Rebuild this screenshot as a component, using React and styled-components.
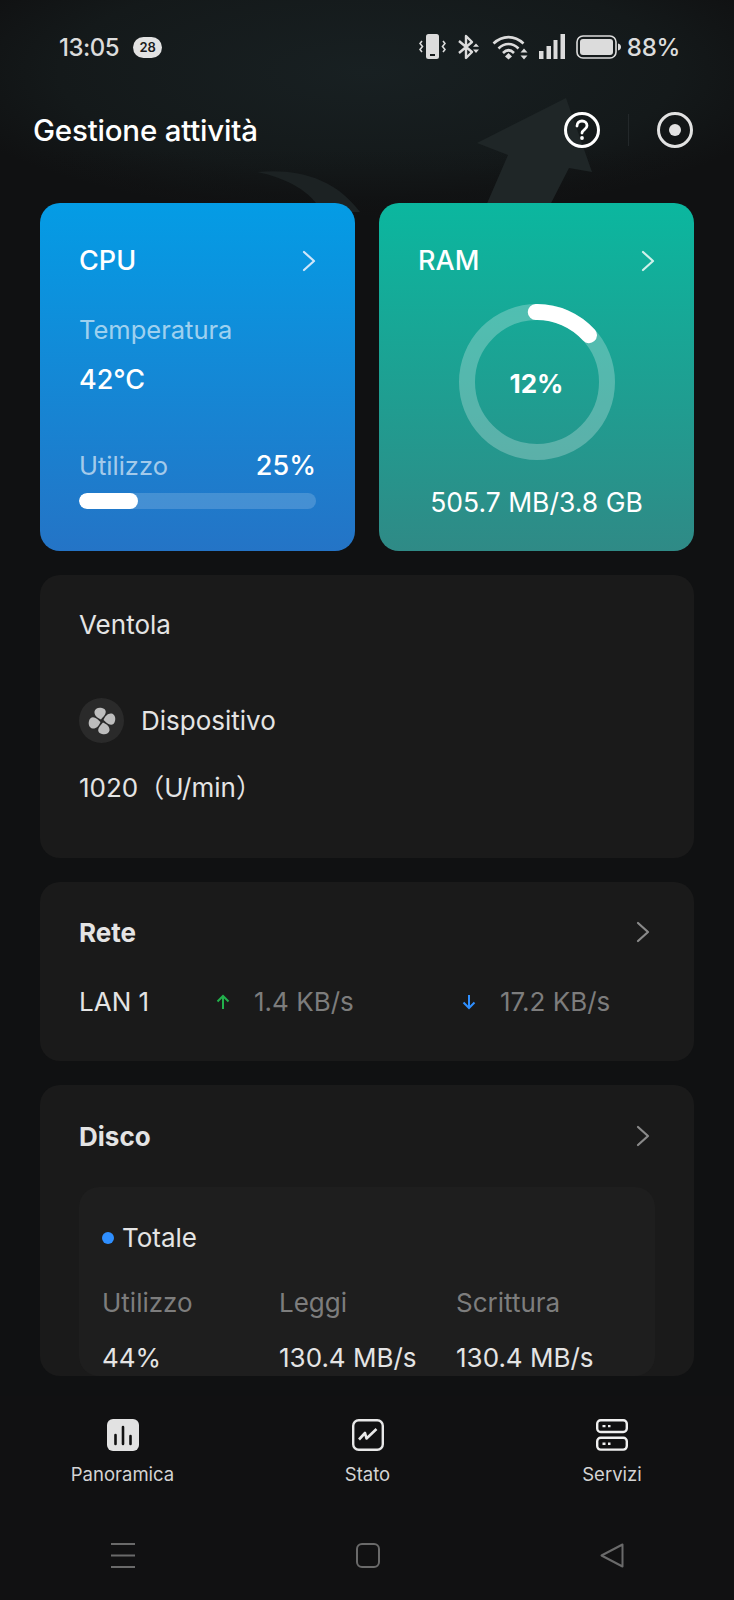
import React from "react";
import styled, { createGlobalStyle } from "styled-components";

const GlobalStyle = createGlobalStyle`
  * { box-sizing: border-box; }
  html, body { margin: 0; padding: 0; background: #101112; }
  body { font-family: Inter, "Noto Sans CJK SC", sans-serif; }
`;

const Screen = styled.div`
  position: relative;
  display: flex;
  flex-direction: column;
  width: 734px;
  height: 1600px;
  overflow: hidden;
  background: #101112;
  color: #e4e4e4;
`;

const Backdrop = styled.svg`
  position: absolute;
  top: 0;
  left: 0;
  width: 734px;
  height: 240px;
`;

const StatusBar = styled.div`
  position: relative;
  display: flex;
  align-items: center;
  height: 94px;
  padding: 0 54px 0 59px;
  color: #dcdcdc;
`;

const Time = styled.span`
  font-size: 24px;
  font-weight: 500;
  letter-spacing: -0.5px;
`;

const Badge = styled.span`
  display: flex;
  align-items: center;
  justify-content: center;
  width: 29px;
  height: 21px;
  margin-left: 14px;
  border-radius: 11px;
  background: #e2e2e2;
  color: #1a1a1a;
  font-size: 13px;
  font-weight: 600;
`;

const StatusIcons = styled.div`
  display: flex;
  align-items: center;
  margin-left: auto;
  gap: 11px;
`;

const Percent = styled.span`
  margin-left: -5px;
  font-size: 24px;
  font-weight: 500;
  letter-spacing: -0.3px;
`;

const Header = styled.header`
  position: relative;
  display: flex;
  align-items: center;
  height: 72px;
  padding: 0 41px 0 33px;
`;

const PageTitle = styled.h1`
  margin: 0;
  color: #fff;
  font-size: 29.5px;
  font-weight: 500;
  letter-spacing: -0.2px;
`;

const HeaderActions = styled.div`
  display: flex;
  align-items: center;
  margin-left: auto;
`;

const Divider = styled.span`
  width: 1px;
  height: 32px;
  margin: 0 28px;
  background: #23282a;
`;

const Content = styled.main`
  position: relative;
  display: flex;
  flex: 1;
  flex-direction: column;
  gap: 24px;
  min-height: 0;
  margin: 37px 40px 0 40px;
  overflow: hidden;
`;

const TopCards = styled.div`
  display: grid;
  flex-shrink: 0;
  grid-template-columns: 1fr 1fr;
  gap: 24px;
  height: 348px;
`;

const ColorCard = styled.section`
  display: flex;
  flex-direction: column;
  padding: 40px 39px 0;
  border-radius: 20px;
  background: linear-gradient(180deg, ${(p) => p.$from}, ${(p) => p.$to});
  color: #fff;
`;

const CardHead = styled.div`
  display: flex;
  align-items: center;
  justify-content: space-between;
  height: 36px;
  font-size: 27px;
  font-weight: 500;
  line-height: 36px;
`;

const SoftLabel = styled.div`
  margin-top: ${(p) => p.$top || 0}px;
  color: rgba(255, 255, 255, 0.62);
  font-size: 25.5px;
  line-height: 36px;
`;

const BigValue = styled.div`
  margin-top: ${(p) => p.$top || 0}px;
  font-size: 27px;
  font-weight: 500;
  line-height: 36px;
`;

const UsageRow = styled.div`
  display: flex;
  align-items: center;
  justify-content: space-between;
  margin-top: 50px;
`;

const Track = styled.div`
  height: 16px;
  margin-top: 9px;
  border-radius: 8px;
  background: rgba(255, 255, 255, 0.17);
  overflow: hidden;
`;

const Fill = styled.div`
  height: 100%;
  border-radius: 8px;
  background: #fff;
`;

const RingWrap = styled.div`
  display: grid;
  place-items: center;
  align-self: center;
  width: 156px;
  height: 156px;
  margin-top: 25px;

  > * {
    grid-area: 1 / 1;
  }
`;

const RingLabel = styled.span`
  padding-top: 2px;
  font-size: 26px;
  font-weight: 700;
`;

const RamValue = styled.div`
  margin-top: 24px;
  font-size: 26.5px;
  font-weight: 400;
  line-height: 36px;
  text-align: center;
  white-space: nowrap;
`;

const DarkCard = styled.section`
  flex-shrink: 0;
  height: ${(p) => (p.$height ? `${p.$height}px` : "auto")};
  padding: ${(p) => p.$padTop || 32}px 39px 0;
  border-radius: 20px;
  background: #1a1a1a;
`;

const PlainTitle = styled.div`
  font-size: 26px;
  line-height: 36px;
`;

const DeviceRow = styled.div`
  display: flex;
  align-items: center;
  gap: 17px;
  margin-top: 55px;
  font-size: 26px;
`;

const FanBadge = styled.span`
  display: flex;
  align-items: center;
  justify-content: center;
  width: 45px;
  height: 45px;
  border-radius: 50%;
  background: #2a2a2a;
`;

const Rpm = styled.div`
  margin-top: 27px;
  font-size: 26px;
  line-height: 36px;
  white-space: nowrap;
`;

const SectionHead = styled.div`
  display: flex;
  align-items: center;
  justify-content: space-between;
  height: 36px;
  padding-right: 5px;
  font-size: 26px;
  font-weight: 700;
`;

const NetRow = styled.div`
  display: grid;
  grid-template-columns: 137px 246px 1fr;
  align-items: center;
  margin-top: 34px;
  font-size: 26px;
  line-height: 36px;
`;

const NetSpeed = styled.div`
  display: flex;
  align-items: center;
  gap: 24px;
  color: #7d7d7d;
`;

const DiskPanel = styled.div`
  margin-top: 33px;
  padding: 33px 23px 0;
  border-radius: 20px;
  background: #1e1e1e;
`;

const DiskName = styled.div`
  display: flex;
  align-items: center;
  gap: 8px;
  font-size: 26px;
  line-height: 36px;
`;

const Dot = styled.span`
  width: 12px;
  height: 12px;
  border-radius: 50%;
  background: #2f8fff;
`;

const DiskGrid = styled.div`
  display: grid;
  grid-template-columns: repeat(3, 177px);
  row-gap: 19px;
  margin-top: 29px;
  font-size: 26px;
  line-height: 36px;
  white-space: nowrap;
`;

const DiskLabel = styled.span`
  color: #7d7d7d;
`;

const BottomNav = styled.nav`
  display: grid;
  grid-template-columns: 245px 245px 244px;
  flex-shrink: 0;
  height: 124px;
  padding-top: 23px;
  background: #111112;
`;

const Tab = styled.div`
  display: flex;
  flex-direction: column;
  align-items: center;
  gap: 11px;
  color: #d4d4d4;
  font-size: 18.5px;
  line-height: 24px;
`;

const SystemNav = styled.div`
  display: grid;
  grid-template-columns: 245px 245px 244px;
  flex-shrink: 0;
  justify-items: center;
  height: 80px;
  padding-top: 23px;
  background: #111112;
`;

const Chevron = ({ color = "#fff" }) => (
  <svg width="14" height="22" viewBox="0 0 14 22" fill="none">
    <path d="M2 2l10 9-10 9" stroke={color} strokeWidth="2.2" strokeLinecap="round" strokeLinejoin="round" />
  </svg>
);

const VibrateIcon = () => (
  <svg width="27" height="26" viewBox="0 0 27 26" fill="none">
    <rect x="7" y="0" width="13" height="25" rx="2.5" fill="#dcdcdc" />
    <rect x="11" y="20" width="5" height="2" fill="#14191a" />
    <path d="M3 7L1 9.5 3.5 12.5 1 15.5 3 18M24 7l2 2.5-2.5 3 2.5 3-2 2.5" stroke="#dcdcdc" strokeWidth="1.6" />
  </svg>
);

const BluetoothIcon = () => (
  <svg width="24" height="26" viewBox="0 0 24 26" fill="none">
    <path d="M2 7l13 11-6 6V2l6 6L2 19" stroke="#dcdcdc" strokeWidth="2.4" strokeLinejoin="round" />
    <path d="M19 9.5l3 3.2h-6zM19 19l3-3.4h-6z" fill="#dcdcdc" />
  </svg>
);

const WifiIcon = () => (
  <svg width="36" height="26" viewBox="0 0 36 26" fill="none">
    <path d="M1.5 9.5C10.5 1 22.5 1 31.5 9.5M6.5 14.5C12.5 8.5 20.5 8.5 26.5 14.5M11 19c3.500-3.500 7.500-3.500 11 0" stroke="#dcdcdc" strokeWidth="2.6" />
    <path d="M16.500 19l3.500 3.500-3.500 3-3.500-3z" fill="#dcdcdc" />
    <path d="M32 14.500l3.500 4h-7zM32 25.500l3.500-4h-7z" fill="#dcdcdc" />
  </svg>
);

const SignalIcon = () => (
  <svg width="26" height="26" viewBox="0 0 26 26" fill="#dcdcdc">
    <rect x="0" y="17" width="4.500" height="8" />
    <rect x="7.500" y="12" width="4.500" height="13" />
    <rect x="14.500" y="6" width="4" height="19" />
    <rect x="21.500" y="0" width="4.500" height="25" />
  </svg>
);

const BatteryIcon = () => (
  <svg width="45" height="24" viewBox="0 0 45 24" fill="none">
    <rect x="1" y="1" width="39" height="22" rx="6" stroke="#dcdcdc" strokeWidth="1.600" />
    <rect x="4" y="4" width="33" height="16" rx="3" fill="#dcdcdc" />
    <path d="M42 8.500c2 .6 3 1.800 3 3.500s-1 2.900-3 3.500z" fill="#dcdcdc" />
  </svg>
);

const HelpIcon = () => (
  <svg width="36" height="36" viewBox="0 0 36 36" fill="none">
    <circle cx="18" cy="18" r="16.500" stroke="#fff" strokeWidth="3" />
    <path d="M13 14c0-3 2.200-5 5-5s5 2 5 4.700c0 3.800-5 3.800-5 7.300" stroke="#fff" strokeWidth="2.800" strokeLinecap="round" />
    <circle cx="18" cy="26" r="1.900" fill="#fff" />
  </svg>
);

const RecordIcon = () => (
  <svg width="36" height="36" viewBox="0 0 36 36" fill="none">
    <circle cx="18" cy="18" r="16.500" stroke="#e2e2e2" strokeWidth="3" />
    <circle cx="18" cy="18" r="6" fill="#e2e2e2" />
  </svg>
);

const FanIcon = () => (
  <svg width="28" height="28" viewBox="0 0 28 28" fill="#bdbdbd">
    <path d="M13 12.500C9 11 6 8 6.500 4.500 7 1.500 10.500 0 14 1c4 1 4.500 4 3 6.500-1 1.700-2.500 3-4 5z" />
    <path d="M15.500 13c1.500-4 4.500-7 8-6.500 3 .5 4.500 4 3.500 7.500-1 4-4 4.500-6.500 3-1.700-1-3.500-2.500-5-4z" />
    <path d="M15 15.500c4 1.500 7 4.500 6.500 8-.5 3-4 4.500-7.500 3.500-4-1-4.500-4-3-6.500 1-1.700 2.500-3.500 4-5z" />
    <path d="M12.500 15c-1.500 4-4.500 7-8 6.500C1.500 21 0 17.500 1 14c1-4 4-4.500 6.500-3 1.700 1 3.500 2.500 5 4z" />
  </svg>
);

const ArrowIcon = ({ down, color }) => (
  <svg width="14" height="16" viewBox="0 0 14 16" fill="none">
    <path
      d={down ? "M7 1v13M1.500 8.500L7 14l5.500-5.500" : "M7 15V2M1.500 7.500L7 2l5.500 5.500"}
      stroke={color}
      strokeWidth="2"
    />
  </svg>
);

const OverviewIcon = () => (
  <svg width="32" height="32" viewBox="0 0 32 32">
    <rect width="32" height="32" rx="6" fill="#e2e2e2" />
    <path d="M8.500 16v9M16 8v17M23.500 17v8" stroke="#111" strokeWidth="2.600" strokeLinecap="round" />
  </svg>
);

const StatusIcon = () => (
  <svg width="32" height="32" viewBox="0 0 32 32" fill="none">
    <rect x="1.200" y="1.200" width="29.600" height="29.600" rx="5.500" stroke="#e8e8e8" strokeWidth="2.400" />
    <path d="M7 20.500l6-6.500 1.500 5.500L24.500 10" stroke="#e8e8e8" strokeWidth="2.600" strokeLinejoin="round" />
  </svg>
);

const ServicesIcon = () => (
  <svg width="32" height="32" viewBox="0 0 32 32" fill="none">
    <rect x="1.200" y="1.200" width="29.600" height="11.800" rx="3.500" stroke="#f0f0f0" strokeWidth="2.400" />
    <rect x="1.200" y="18.800" width="29.600" height="11.800" rx="3.500" stroke="#f0f0f0" strokeWidth="2.400" />
    <path d="M6.500 7.100h3M12 7.100h2.500M6.500 24.700h3M12 24.700h2.500" stroke="#f0f0f0" strokeWidth="2.400" />
  </svg>
);

const MenuKey = () => (
  <svg width="24" height="25" viewBox="0 0 24 25" fill="#6a6a6a">
    <rect y="0" width="24" height="2" />
    <rect y="11.500" width="24" height="2" />
    <rect y="23" width="24" height="2" />
  </svg>
);

const HomeKey = () => (
  <svg width="24" height="25" viewBox="0 0 24 25" fill="none">
    <rect x="1" y="1" width="22" height="23" rx="5" stroke="#6a6a6a" strokeWidth="2" />
  </svg>
);

const BackKey = () => (
  <svg width="24" height="25" viewBox="0 0 24 25" fill="none">
    <path d="M22.500 1.500v22L1.500 12.500z" stroke="#6a6a6a" strokeWidth="2" strokeLinejoin="round" />
  </svg>
);

const App = () => (
  <Screen>
    <GlobalStyle />
    <Backdrop viewBox="0 0 734 240">
      <defs>
        <radialGradient id="glow" cx="50%" cy="30%" r="60%">
          <stop offset="0%" stopColor="#182022" />
          <stop offset="70%" stopColor="#14191a" />
          <stop offset="100%" stopColor="#101112" />
        </radialGradient>
        <linearGradient id="fade" x1="0" y1="0" x2="0" y2="1">
          <stop offset="0%" stopColor="#101112" stopOpacity="0" />
          <stop offset="100%" stopColor="#101112" />
        </linearGradient>
      </defs>
      <rect width="734" height="240" fill="url(#glow)" />
      <rect y="150" width="734" height="90" fill="url(#fade)" />
      <path d="M566 98L477 143 508 155 482 215H545L569 168 592 172z" fill="#1f2627" />
      <path d="M257 172c40-4 78 6 103 40H322c-10-20-35-34-65-40z" fill="#1c2223" />
    </Backdrop>

    <StatusBar>
      <Time>13:05</Time>
      <Badge>28</Badge>
      <StatusIcons>
        <VibrateIcon />
        <BluetoothIcon />
        <WifiIcon />
        <SignalIcon />
        <BatteryIcon />
        <Percent>88%</Percent>
      </StatusIcons>
    </StatusBar>

    <Header>
      <PageTitle>Gestione attività</PageTitle>
      <HeaderActions>
        <HelpIcon />
        <Divider />
        <RecordIcon />
      </HeaderActions>
    </Header>

    <Content>
      <TopCards>
        <ColorCard $from="#049ce5" $to="#2474c6">
          <CardHead>
            CPU
            <Chevron color="#cfe6fa" />
          </CardHead>
          <SoftLabel $top={33}>Temperatura</SoftLabel>
          <BigValue $top={14}>42℃</BigValue>
          <UsageRow>
            <SoftLabel>Utilizzo</SoftLabel>
            <BigValue>25%</BigValue>
          </UsageRow>
          <Track>
            <Fill style={{ width: "25%" }} />
          </Track>
        </ColorCard>

        <ColorCard $from="#0bb79f" $to="#2f8a86">
          <CardHead>
            RAM
            <Chevron color="#cff1ea" />
          </CardHead>
          <RingWrap>
            <svg width="156" height="156" viewBox="0 0 156 156" fill="none">
              <circle cx="78" cy="78" r="70" stroke="rgba(255,255,255,0.25)" strokeWidth="16" />
              <circle
                cx="78"
                cy="78"
                r="70"
                stroke="#fff"
                strokeWidth="16"
                strokeLinecap="round"
                pathLength="100"
                strokeDasharray="13.6 100"
                transform="rotate(-91 78 78)"
              />
            </svg>
            <RingLabel>12%</RingLabel>
          </RingWrap>
          <RamValue>505.7 MB/3.8 GB</RamValue>
        </ColorCard>
      </TopCards>

      <DarkCard $height={283}>
        <PlainTitle>Ventola</PlainTitle>
        <DeviceRow>
          <FanBadge>
            <FanIcon />
          </FanBadge>
          Dispositivo
        </DeviceRow>
        <Rpm>1020（U/min）</Rpm>
      </DarkCard>

      <DarkCard $height={179}>
        <SectionHead>
          Rete
          <Chevron color="#8a8a8a" />
        </SectionHead>
        <NetRow>
          LAN 1
          <NetSpeed>
            <ArrowIcon color="#22b14c" />
            1.4 KB/s
          </NetSpeed>
          <NetSpeed>
            <ArrowIcon down color="#2f8fff" />
            17.2 KB/s
          </NetSpeed>
        </NetRow>
      </DarkCard>

      <DarkCard $padTop={33}>
        <SectionHead>
          Disco
          <Chevron color="#8a8a8a" />
        </SectionHead>
        <DiskPanel>
          <DiskName>
            <Dot />
            Totale
          </DiskName>
          <DiskGrid>
            <DiskLabel>Utilizzo</DiskLabel>
            <DiskLabel>Leggi</DiskLabel>
            <DiskLabel>Scrittura</DiskLabel>
            <span>44%</span>
            <span>130.4 MB/s</span>
            <span>130.4 MB/s</span>
          </DiskGrid>
        </DiskPanel>
      </DarkCard>
    </Content>

    <BottomNav>
      <Tab>
        <OverviewIcon />
        Panoramica
      </Tab>
      <Tab>
        <StatusIcon />
        Stato
      </Tab>
      <Tab>
        <ServicesIcon />
        Servizi
      </Tab>
    </BottomNav>

    <SystemNav>
      <MenuKey />
      <HomeKey />
      <BackKey />
    </SystemNav>
  </Screen>
);

export default App;
